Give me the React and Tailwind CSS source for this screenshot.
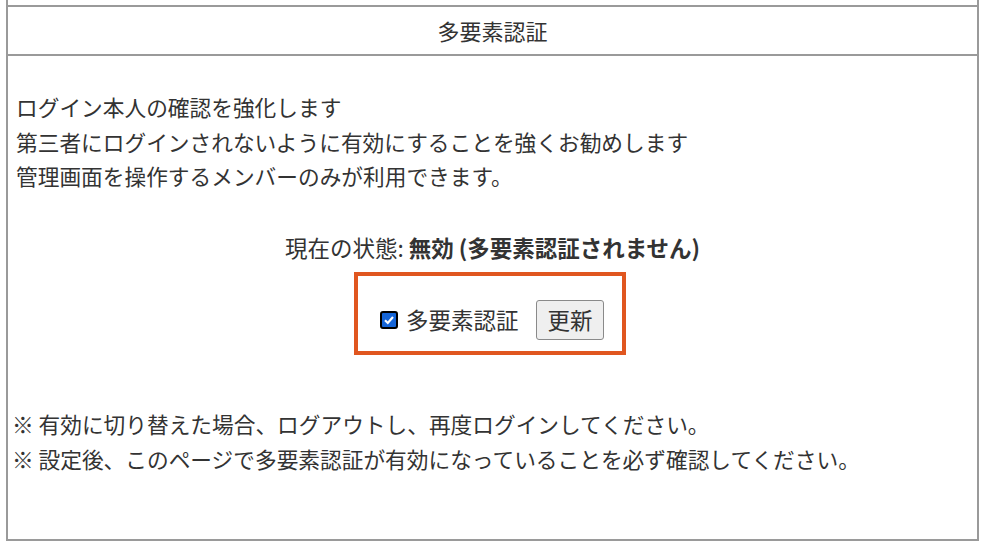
export default function App() {
  return (
    <div
      className="h-[545px] w-[983px] overflow-hidden bg-white text-[#333]"
      style={{ fontFamily: '"Noto Sans CJK JP", "Noto Sans", sans-serif' }}
    >
      <div className="ml-[6px] flex h-[541px] w-[973px] flex-col border-x-2 border-b-2 border-[#9a9a9a]">
        {/* previous row, cut off */}
        <div className="h-[7px] border-b-2 border-[#9a9a9a]" />
        {/* header */}
        <div className="flex h-[49px] items-center justify-center border-b-2 border-[#9a9a9a] text-[22px]">
          多要素認証
        </div>
        {/* body */}
        <div className="flex-1 px-[7px] pt-[34px] text-[21.7px] leading-[34.5px]">
          <p className="pl-[1px]">ログイン本人の確認を強化します</p>
          <p className="pl-[1px]">第三者にログインされないように有効にすることを強くお勧めします</p>
          <p className="pl-[1px]">管理画面を操作するメンバーのみが利用できます。</p>

          <p className="mt-[36px] text-center text-[22.5px]">
            現在の状態: <span className="font-bold">無効 (多要素認証されません)</span>
          </p>

          <div className="mt-[8px] flex justify-center">
            <div className="mr-[5px] flex h-[83px] w-[272px] items-center border-4 border-[#e0561f] pl-[22px] pr-[18px] pt-[12px]">
              <span className="flex h-[18px] w-[18px] items-center justify-center rounded-[3px] border-2 border-black bg-[#1565d8]">
                <svg viewBox="0 0 12 12" className="h-[12px] w-[12px]">
                  <path d="M2 6.3 L4.8 9 L10 3" fill="none" stroke="white" strokeWidth="2.2" />
                </svg>
              </span>
              <span className="ml-[8px] text-[22.5px]">多要素認証</span>
              <button className="ml-auto h-[40px] w-[68px] rounded-[3px] border border-[#8a8a8a] bg-[#efefef] text-[22.5px] text-[#333]">
                更新
              </button>
            </div>
          </div>

          <p className="-ml-[3px] mt-[52px]">※ 有効に切り替えた場合、ログアウトし、再度ログインしてください。</p>
          <p className="-ml-[3px]">※ 設定後、このページで多要素認証が有効になっていることを必ず確認してください。</p>
        </div>
      </div>
    </div>
  );
}
